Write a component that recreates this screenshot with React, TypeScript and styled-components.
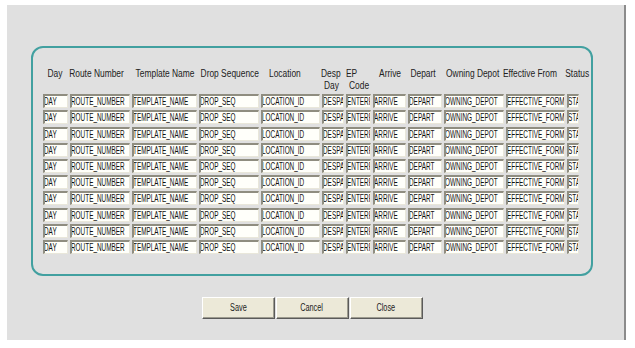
import React from "react";
import styled, { createGlobalStyle } from "styled-components";

const GlobalStyle = createGlobalStyle`
  html, body {
    margin: 0;
    padding: 0;
    background: #ffffff;
  }
  body {
    font-family: "Liberation Sans", Arial, sans-serif;
  }
`;

type Column = {
  label: string[];
  value: string;
  width: number;
  shift?: number;
  align?: "left" | "center";
};

const columns: Column[] = [
  { label: ["Day"], value: "DAY", width: 25, shift: -1 },
  { label: ["Route Number"], value: "ROUTE_NUMBER", width: 60, shift: -3 },
  { label: ["Template Name"], value: "TEMPLATE_NAME", width: 65, shift: 1 },
  { label: ["Drop Sequence"], value: "DROP_SEQ", width: 60, shift: 1 },
  { label: ["Location"], value: "LOCATION_ID", width: 59, shift: -6 },
  { label: ["Desp", "Day"], value: "DESPATCH_DAY", width: 22 },
  { label: ["EP", "Code"], value: "ENTERPRISE_CODE", width: 25, align: "left" },
  { label: ["Arrive"], value: "ARRIVE", width: 33, shift: 1 },
  { label: ["Depart"], value: "DEPART", width: 34, shift: -2 },
  { label: ["Owning Depot"], value: "OWNING_DEPOT", width: 60, shift: -1 },
  { label: ["Effective From"], value: "EFFECTIVE_FORM", width: 59 },
  { label: ["Status"], value: "STATUS", width: 12, shift: 4 },
];

const ROWS = 10;

export default function App() {
  return (
    <>
      <GlobalStyle />
      <Frame>
        <Panel>
          <Grid $cols={columns.map((c) => `${c.width}px`).join(" ")}>
            {columns.map((c, i) => (
              <HeaderCell key={`h${i}`} $align={c.align ?? "center"}>
                {c.label.map((line, j) => (
                  <HeaderLine
                    key={j}
                    $shift={c.shift ?? 0}
                    $indent={c.align === "left" && j > 0 ? 3 : 0}
                  >
                    {line}
                  </HeaderLine>
                ))}
              </HeaderCell>
            ))}
            {Array.from({ length: ROWS }).map((_, r) =>
              columns.map((c, i) => (
                <Field key={`${r}-${i}`}>
                  <FieldText>{c.value}</FieldText>
                </Field>
              ))
            )}
          </Grid>
        </Panel>
        <ButtonRow>
          <Button>
            <ButtonLabel>Save</ButtonLabel>
          </Button>
          <Button>
            <ButtonLabel>Cancel</ButtonLabel>
          </Button>
          <Button>
            <ButtonLabel>Close</ButtonLabel>
          </Button>
        </ButtonRow>
      </Frame>
    </>
  );
}

const Frame = styled.div`
  margin: 5px 0 0 7px;
  width: 619px;
  height: 335px;
  box-sizing: border-box;
  padding: 41px 0 0 24px;
  background: #e0e0e0;
  border-right: 2px solid #8c8c8c;
  display: flex;
  flex-direction: column;
`;

const Panel = styled.div`
  width: 562px;
  box-sizing: border-box;
  border: 2px solid #42a0a0;
  border-radius: 12px;
  padding: 20px 0 20px 10px;
`;

const Grid = styled.div<{ $cols: string }>`
  display: grid;
  grid-template-columns: ${(p) => p.$cols};
  grid-template-rows: 24px repeat(${ROWS}, 14px);
  column-gap: 2px;
  row-gap: 2.2px;
`;

const HeaderCell = styled.div<{ $align: string }>`
  display: flex;
  flex-direction: column;
  align-items: ${(p) => (p.$align === "left" ? "flex-start" : "center")};
  font-size: 10px;
  line-height: 12px;
  color: #222;
  white-space: nowrap;
`;

const HeaderLine = styled.span<{ $shift: number; $indent: number }>`
  display: inline-block;
  transform-origin: ${(p) => (p.$indent || p.$shift === 0 ? "left" : "center")} center;
  transform: translateX(${(p) => p.$shift + p.$indent}px) scaleX(0.84);
`;

const Field = styled.div`
  box-sizing: border-box;
  height: 14px;
  overflow: hidden;
  background: #fffffa;
  border-top: 2px solid #8f8d80;
  border-left: 2px solid #8f8d80;
  border-right: 1px solid #e9e7da;
  border-bottom: 1px solid #e9e7da;
  font-size: 10px;
  line-height: 11px;
  color: #111;
  white-space: nowrap;
`;

const FieldText = styled.span`
  display: inline-block;
  transform-origin: left center;
  transform: translateX(-1px) scaleX(0.64);
`;

const ButtonRow = styled.div`
  width: 562px;
  margin-top: 21px;
  display: flex;
  justify-content: center;
  gap: 1px;
`;

const Button = styled.button`
  width: 73px;
  height: 22px;
  padding: 0;
  background: #ece9d8;
  border: 1px solid;
  border-color: #ffffff #5a5a5a #5a5a5a #ffffff;
  box-shadow: inset -1px -1px 0 #9d9b8f;
  font-family: "Liberation Sans", Arial, sans-serif;
  font-size: 10px;
  color: #222;
  display: flex;
  align-items: center;
  justify-content: center;
`;

const ButtonLabel = styled.span`
  display: inline-block;
  transform: scaleX(0.73);
`;
